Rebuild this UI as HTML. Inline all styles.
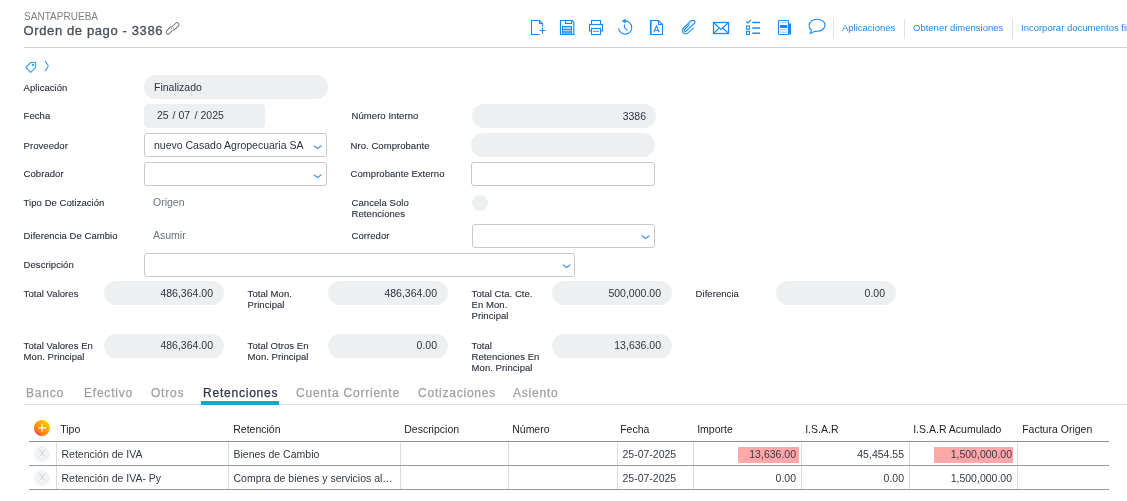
<!DOCTYPE html>
<html><head><meta charset="utf-8">
<style>
*{box-sizing:border-box;margin:0;padding:0}
html,body{width:1127px;height:501px;overflow:hidden;background:#fff;-webkit-font-smoothing:antialiased;font-family:"Liberation Sans",sans-serif;color:#353b48}
.a{position:absolute;white-space:nowrap}
.lbl{position:absolute;font-size:9.5px;letter-spacing:0.05px;margin-left:-0.4px;-webkit-text-stroke:0.12px #2a303c;color:#2a303c;white-space:nowrap;line-height:11px}
.pill{position:absolute;background:#eeeff1;border-radius:12px;height:24px}
.box{position:absolute;border:1px solid #c8c8c8;border-radius:3px;height:24px;background:#fff}
.val{position:absolute;font-size:10.5px;color:#2e3440;white-space:nowrap}
.chev{position:absolute;width:9px;height:5px}
.link{position:absolute;font-size:9.5px;color:#2488e6;white-space:nowrap}
.sep{position:absolute;width:1px;background:#e2e2e2;top:19px;height:20px}
.tab{position:absolute;font-size:12px;color:#a0a0a0;white-space:nowrap;top:385.8px;letter-spacing:0.78px;-webkit-text-stroke:0.25px currentColor}
.th{position:absolute;font-size:10.5px;color:#1e1e1e;margin-left:-0.8px;top:423px;white-space:nowrap}
.td{position:absolute;font-size:10.5px;color:#333a44;margin-left:-0.5px;white-space:nowrap}
.vl{position:absolute;width:1px;background:#dcdcdc}
.hl{position:absolute;height:1px;left:29px;width:1080px}
</style></head><body><div style="position:absolute;left:0;top:0;width:1127px;height:501px;will-change:transform">
<!-- header -->
<div class="a" style="left:24px;top:10.8px;font-size:10px;color:#808080;letter-spacing:0.03px">SANTAPRUEBA</div>
<div class="a" style="left:23.5px;top:23px;font-size:13px;letter-spacing:0.62px;color:#4a505c;-webkit-text-stroke:0.35px #4a505c">Orden de pago - 3386</div>
<svg class="a" style="left:160px;top:18px" width="24" height="22" viewBox="160 18 24 22" fill="none" stroke="#6f6f6f" stroke-width="0.95"><rect x="-4.3" y="-1.9" width="8.6" height="3.8" rx="1.9" transform="translate(175.3 26.3) rotate(-45)"/><rect x="-4.3" y="-1.9" width="8.6" height="3.8" rx="1.9" transform="translate(169.7 30.5) rotate(-45)"/><path d="M171.9 30.2L173.2 28.9M171.6 26.9L173.1 28.4" stroke="#fff" stroke-width="1.4"/></svg>

<!-- toolbar icons -->
<svg class="a" style="left:0;top:0" width="1127" height="48" viewBox="0 0 1127 48" fill="none" stroke="#1a8af2" stroke-width="1.1">
<!-- new doc -->
<path d="M539.5 34.5H531.5V20.5H539.5L542.5 23.5V26.3M539.5 20.5V23.5H542.5M539.5 30.5H545.5M542.5 27.5V33.5"/>
<!-- save -->
<path d="M560.5 20.5H572L573.8 22.3V34.4H560.5Z" stroke-width="1.2"/>
<rect x="565.5" y="20.5" width="6" height="3"/>
<rect x="562.5" y="26.5" width="9" height="6.5" fill="#a8d2fa" stroke-width="1"/>
<path d="M563 29.5H571M563 31.8H571" stroke-width="0.9"/>
<!-- print -->
<rect x="591.5" y="20.5" width="9" height="4"/>
<rect x="589.5" y="24.5" width="13" height="6.5"/>
<rect x="591.5" y="28.5" width="9" height="6" fill="#fff"/>
<path d="M593 31.3H599" stroke-width="0.9"/>
<!-- history -->
<path d="M618.6 28.2A6.6 6.6 0 1 0 625.2 20.9"/>
<path d="M621.8 21.1L625.6 18.8V23.4Z" fill="#1a8af2" stroke="none"/>
<path d="M624.4 24.6V27.6L627.6 30.4"/>
<!-- doc A -->
<path d="M658.5 20.5H650.7V34.5H662.5V24.5L658.5 20.5Z"/>
<path d="M650.7 20.5V34.5" stroke-width="1.6"/>
<path d="M658.5 20.5V24.5H662.5"/>
<path d="M653.8 32.3L656.5 25.9L659.2 32.3M654.7 30.3H658.3"/>
<!-- paperclip -->
<path d="M689.6 24.4L684.4 29.6Q683.8 31.4 685.6 31.4L694.8 22.8Q695.6 21 693.8 20.6H691.2L682.8 28.8Q682 32.8 684.6 33.8H687L693.6 27.8"/>
<!-- mail -->
<rect x="713.5" y="22.5" width="15" height="11" stroke-width="1.3"/>
<path d="M713.5 22.5L721 29.5L728.5 22.5M713.5 33.5L719 28M728.5 33.5L723 28"/>
<!-- checklist -->
<path d="M746.3 21.5L747.8 23L750.9 19.9"/>
<rect x="746.5" y="26" width="3" height="3.2"/>
<rect x="746.5" y="31.3" width="3" height="3.2"/>
<path d="M752.3 22.4H760M752.3 27.9H760M752.3 33.3H760" stroke-width="1.5"/>
<!-- newspaper -->
<path d="M788.5 23.5H791V34.5H788.5Z" fill="#1a8af2" stroke="none"/>
<rect x="778.5" y="20.5" width="10" height="14" rx="0.8" stroke-width="1.1"/>
<path d="M780 22.6H787.4M780 29.8H787.4M780 32.2H787.4" stroke="#9ccbfa" stroke-width="1"/>
<rect x="780" y="25" width="7.4" height="3" fill="#1a8af2" stroke="none"/>
<!-- speech -->
<path d="M811.6 30.2C809 28.5 809.2 26.3 809.2 25.2C809.2 21.8 812.7 19.2 817.1 19.2C821.5 19.2 825 21.8 825 25.2C825 28.6 821.5 31.2 817.1 31.2C816 31.2 814.8 31.1 813.8 31.7L810.3 33.4Z"/>
</svg>

<div class="sep" style="left:833px"></div>
<div class="link" style="left:842px;top:22px">Aplicaciones</div>
<div class="sep" style="left:904px"></div>
<div class="link" style="left:913px;top:22px">Obtener dimensiones</div>
<div class="sep" style="left:1012px"></div>
<div class="link" style="left:1021px;top:22px">Incorporar documentos financieros</div>
<div class="a" style="left:24px;top:47px;width:1103px;height:1px;background:#cfd1d5"></div>

<!-- tag + chevron -->
<svg class="a" style="left:24px;top:60px" width="28" height="14" viewBox="0 0 28 14" fill="none" stroke="#36a0f4" stroke-width="1.1" stroke-linejoin="round"><path d="M2 7.5L6.7 2.5H11.2L11.6 2.9V7.3L6.7 12.3Z"/><circle cx="8.9" cy="4.9" r="0.55" fill="#36a0f4"/><path d="M21.3 1.3Q23.2 3.8 24.3 5.9Q23.2 8.1 21.3 10.6" stroke-linecap="round"/></svg>

<!-- form rows -->
<div class="lbl" style="left:24px;top:82px">Aplicación</div>
<div class="pill" style="left:144px;top:75px;width:184px"></div>
<div class="val" style="left:154px;top:81px">Finalizado</div>

<div class="lbl" style="left:24px;top:110px">Fecha</div>
<div class="pill" style="left:144px;top:104px;width:121px;border-radius:4px"></div>
<div class="val" style="left:157px;top:109px">25</div><div class="val" style="left:172.5px;top:109px">/</div><div class="val" style="left:178.5px;top:109px">07</div><div class="val" style="left:194.5px;top:109px">/</div><div class="val" style="left:200.5px;top:109px">2025</div>

<div class="lbl" style="left:352px;top:110px">Número Interno</div>
<div class="pill" style="left:472px;top:104px;width:184px"></div>
<div class="val" style="left:472px;top:109.5px;width:174px;text-align:right">3386</div>

<div class="lbl" style="left:24px;top:140px">Proveedor</div>
<div class="box" style="left:144px;top:133px;width:183px"></div>
<div class="val" style="left:154px;top:139px">nuevo Casado Agropecuaria SA</div>
<svg class="chev" style="left:313px;top:145px" viewBox="0 0 9 5" fill="none" stroke="#4a93dd" stroke-width="1.2" stroke-linecap="round"><path d="M1.2 0.9L4.6 3.5L8 0.9"/></svg>

<div class="lbl" style="left:351px;top:140px">Nro. Comprobante</div>
<div class="pill" style="left:471px;top:133px;width:184px"></div>

<div class="lbl" style="left:24px;top:168px">Cobrador</div>
<div class="box" style="left:144px;top:162px;width:183px"></div>
<svg class="chev" style="left:313px;top:174px" viewBox="0 0 9 5" fill="none" stroke="#4a93dd" stroke-width="1.2" stroke-linecap="round"><path d="M1.2 0.9L4.6 3.5L8 0.9"/></svg>

<div class="lbl" style="left:351px;top:168px">Comprobante Externo</div>
<div class="box" style="left:471px;top:162px;width:184px;border-radius:3px"></div>

<div class="lbl" style="left:24px;top:197px">Tipo De Cotización</div>
<div class="val" style="left:153px;top:196px;color:#6b7280">Origen</div>
<div class="lbl" style="left:352px;top:197px">Cancela Solo<br>Retenciones</div>
<div class="a" style="left:472px;top:195px;width:16px;height:16px;border-radius:50%;background:#eeeff1"></div>

<div class="lbl" style="left:24px;top:230px">Diferencia De Cambio</div>
<div class="val" style="left:153px;top:229px;color:#6b7280">Asumir</div>
<div class="lbl" style="left:352px;top:230px">Corredor</div>
<div class="box" style="left:472px;top:224px;width:183px"></div>
<svg class="chev" style="left:641px;top:235px" viewBox="0 0 9 5" fill="none" stroke="#4a93dd" stroke-width="1.2" stroke-linecap="round"><path d="M1.2 0.9L4.6 3.5L8 0.9"/></svg>

<div class="lbl" style="left:24px;top:259px">Descripción</div>
<div class="box" style="left:144px;top:253px;width:431px"></div>
<svg class="chev" style="left:562px;top:264px" viewBox="0 0 9 5" fill="none" stroke="#4a93dd" stroke-width="1.2" stroke-linecap="round"><path d="M1.2 0.9L4.6 3.5L8 0.9"/></svg>

<!-- totals -->
<div class="lbl" style="left:24px;top:288px">Total Valores</div>
<div class="pill" style="left:104px;top:281px;width:120px"></div>
<div class="val" style="left:104px;top:287px;width:109px;text-align:right">486,364.00</div>

<div class="lbl" style="left:248px;top:288px">Total Mon.<br>Principal</div>
<div class="pill" style="left:328px;top:281px;width:120px"></div>
<div class="val" style="left:328px;top:287px;width:109px;text-align:right">486,364.00</div>

<div class="lbl" style="left:472px;top:288px">Total Cta. Cte.<br>En Mon.<br>Principal</div>
<div class="pill" style="left:552px;top:281px;width:120px"></div>
<div class="val" style="left:552px;top:287px;width:109px;text-align:right">500,000.00</div>

<div class="lbl" style="left:696px;top:288px">Diferencia</div>
<div class="pill" style="left:776px;top:281px;width:120px"></div>
<div class="val" style="left:776px;top:287px;width:109px;text-align:right">0.00</div>

<div class="lbl" style="left:24px;top:340px">Total Valores En<br>Mon. Principal</div>
<div class="pill" style="left:104px;top:334px;width:120px"></div>
<div class="val" style="left:104px;top:339px;width:109px;text-align:right">486,364.00</div>

<div class="lbl" style="left:248px;top:340px">Total Otros En<br>Mon. Principal</div>
<div class="pill" style="left:328px;top:334px;width:120px"></div>
<div class="val" style="left:328px;top:339px;width:109px;text-align:right">0.00</div>

<div class="lbl" style="left:472px;top:340px">Total<br>Retenciones En<br>Mon. Principal</div>
<div class="pill" style="left:552px;top:334px;width:120px"></div>
<div class="val" style="left:552px;top:339px;width:109px;text-align:right">13,636.00</div>

<!-- tabs -->
<div class="tab" style="left:26px">Banco</div>
<div class="tab" style="left:84px">Efectivo</div>
<div class="tab" style="left:151px">Otros</div>
<div class="tab" style="left:203px;color:#2d3645">Retenciones</div>
<div class="tab" style="left:296px">Cuenta Corriente</div>
<div class="tab" style="left:418px">Cotizaciones</div>
<div class="tab" style="left:513px">Asiento</div>
<div class="a" style="left:24px;top:404px;width:1103px;height:1px;background:#dedede"></div>
<div class="a" style="left:201px;top:401px;width:78px;height:4px;background:#08acd3"></div>

<!-- table -->
<svg class="a" style="left:34px;top:420px" width="16" height="16" viewBox="0 0 16 16"><defs><linearGradient id="og" x1="0.85" y1="0.1" x2="0.15" y2="0.9"><stop offset="0" stop-color="#ffd500"/><stop offset="0.45" stop-color="#ffa000"/><stop offset="0.8" stop-color="#ff7a12"/><stop offset="1" stop-color="#ff1f73"/></linearGradient></defs><circle cx="8" cy="8" r="8" fill="url(#og)"/><path d="M8 4v7.8M4 7.8h8" stroke="#fff" stroke-width="1.15"/></svg>
<div class="th" style="left:61px">Tipo</div>
<div class="th" style="left:234px">Retención</div>
<div class="th" style="left:405px">Descripcion</div>
<div class="th" style="left:513px">Número</div>
<div class="th" style="left:621px">Fecha</div>
<div class="th" style="left:698px">Importe</div>
<div class="th" style="left:806px">I.S.A.R</div>
<div class="th" style="left:914px">I.S.A.R Acumulado</div>
<div class="th" style="left:1023px">Factura Origen</div>
<div class="hl" style="top:441px;background:#8f8f8f"></div>
<div class="hl" style="top:465px;background:#9a9a9a"></div>
<div class="hl" style="top:489px;background:#9a9a9a"></div>
<div class="vl" style="left:56px;top:442px;height:23px"></div><div class="vl" style="left:56px;top:466px;height:23px"></div>
<div class="vl" style="left:228px;top:442px;height:23px"></div><div class="vl" style="left:228px;top:466px;height:23px"></div>
<div class="vl" style="left:400px;top:442px;height:23px"></div><div class="vl" style="left:400px;top:466px;height:23px"></div>
<div class="vl" style="left:508px;top:442px;height:23px"></div><div class="vl" style="left:508px;top:466px;height:23px"></div>
<div class="vl" style="left:617px;top:442px;height:23px"></div><div class="vl" style="left:617px;top:466px;height:23px"></div>
<div class="vl" style="left:693px;top:442px;height:23px"></div><div class="vl" style="left:693px;top:466px;height:23px"></div>
<div class="vl" style="left:801px;top:442px;height:23px"></div><div class="vl" style="left:801px;top:466px;height:23px"></div>
<div class="vl" style="left:909px;top:442px;height:23px"></div><div class="vl" style="left:909px;top:466px;height:23px"></div>
<div class="vl" style="left:1017px;top:442px;height:23px"></div><div class="vl" style="left:1017px;top:466px;height:23px"></div>
<svg class="a" style="left:34px;top:446px" width="16" height="16" viewBox="0 0 16 16"><circle cx="8" cy="8" r="8" fill="#f2f3f5"/><path d="M5.3 3.4L10.9 10.8M10.7 3.4L5.3 10.8" stroke="#cdd0d4" stroke-width="0.85"/></svg>
<svg class="a" style="left:34px;top:470px" width="16" height="16" viewBox="0 0 16 16"><circle cx="8" cy="8" r="8" fill="#f2f3f5"/><path d="M5.3 3.4L10.9 10.8M10.7 3.4L5.3 10.8" stroke="#cdd0d4" stroke-width="0.85"/></svg>
<div class="td" style="left:62px;top:448px">Retención de IVA</div>
<div class="td" style="left:234px;top:448px">Bienes de Cambio</div>
<div class="td" style="left:623px;top:448px">25-07-2025</div>
<div class="a" style="left:738px;top:447px;width:61px;height:16px;background:#ffa8a8"></div>
<div class="td" style="left:694px;top:448px;width:102.5px;text-align:right">13,636.00</div>
<div class="td" style="left:802px;top:448px;width:102.5px;text-align:right">45,454.55</div>
<div class="a" style="left:934px;top:447px;width:79px;height:16px;background:#ffa8a8"></div>
<div class="td" style="left:910px;top:448px;width:102.5px;text-align:right">1,500,000.00</div>
<div class="td" style="left:62px;top:472px">Retención de IVA- Py</div>
<div class="td" style="left:234px;top:472px">Compra de bienes y servicios al…</div>
<div class="td" style="left:623px;top:472px">25-07-2025</div>
<div class="td" style="left:694px;top:472px;width:102.5px;text-align:right">0.00</div>
<div class="td" style="left:802px;top:472px;width:102.5px;text-align:right">0.00</div>
<div class="td" style="left:910px;top:472px;width:102.5px;text-align:right">1,500,000.00</div>
</div></body></html>
